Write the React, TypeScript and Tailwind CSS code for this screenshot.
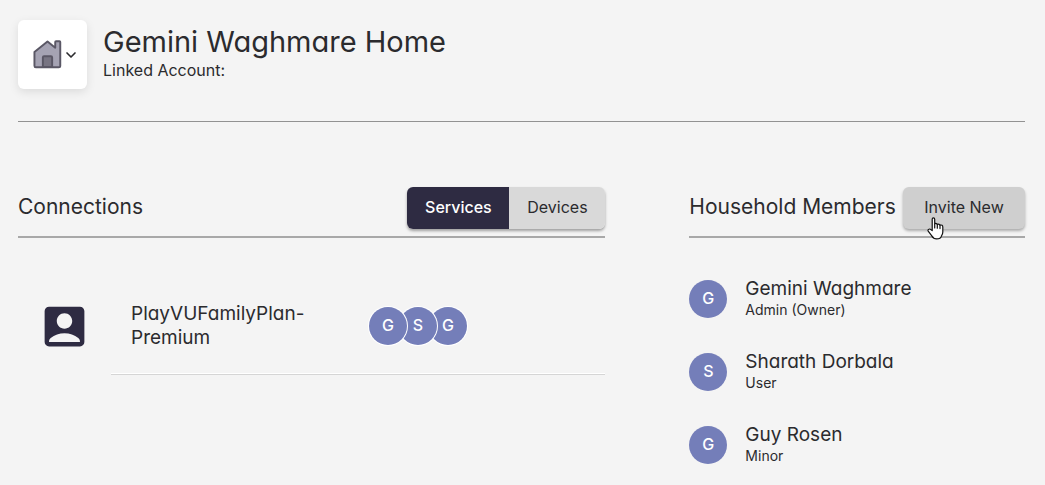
import { MdAccountBox } from "react-icons/md";
import { ChevronDown } from "lucide-react";
import { clsx } from "clsx";
import { useState } from "react";

const members = [
  { name: "Gemini Waghmare", role: "Admin (Owner)" },
  { name: "Sharath Dorbala", role: "User" },
  { name: "Guy Rosen", role: "Minor" },
];

const tabs = ["Services", "Devices"];

function HouseIcon() {
  return (
    <svg width="29" height="29" viewBox="0 0 30 30" fill="#a5a3b3" stroke="#5a5765" strokeWidth="2" strokeLinejoin="round" aria-hidden="true">
      <path d="M1.5 12.5 L15 1.5 L23 8 V2 Q23 1.2 23.8 1.2 H27.4 Q28.2 1.2 28.2 2 V26.6 Q28.2 28.2 26.6 28.2 H3 Q1.5 28.2 1.5 26.6 Z" />
      <path d="M10.2 28 V18 Q10.2 16.8 11.4 16.8 H18.6 Q19.8 16.8 19.8 18 V28 Z" fill="#777482" />
    </svg>
  );
}

function HandPointer() {
  return (
    <svg className="absolute top-[30px] left-6 z-10" width="17" height="23" viewBox="0 0 17 23" fill="#fff" stroke="#111" strokeWidth="1.2" strokeLinejoin="round" strokeLinecap="round" aria-hidden="true">
      <path d="M5.2 13.6 V2.3 Q5.2 0.9 6.4 0.9 Q7.7 0.9 7.7 2.3 V6.9 Q8.8 5.8 10.3 7.3 Q11.7 6.5 13 8.1 Q15.8 7.5 15.8 10.2 V15 Q15.8 17.2 14.5 18.8 Q13.8 21.9 9.6 21.9 Q6.4 21.9 4.8 18.9 L1.2 14.1 Q0.6 12.8 1.8 12.2 Q2.9 11.6 4 12.7 Z" />
      <path d="M7.7 7 V11 M10.3 7.4 V11.2 M13 8.2 V11.6" fill="none" />
    </svg>
  );
}

function Avatar({ name, className }: { name: string; className?: string }) {
  return (
    <div className={clsx("flex size-[38px] shrink-0 items-center justify-center rounded-full bg-[#747eb9] pb-0.5 text-base font-medium text-white", className)}>
      {name[0]}
    </div>
  );
}

export default function App() {
  const [tab, setTab] = useState("Services");

  return (
    <div className="min-h-screen bg-[#f4f4f4] px-5 pt-5 pl-[18px] font-['Inter','Liberation_Sans',sans-serif] text-[#2b2b2e] [font-feature-settings:'cv11']">
      {/* Household header */}
      <header className="flex gap-4 border-b border-[#929292] pb-8">
        <button aria-label="Change household icon" className="flex size-[69px] shrink-0 items-center justify-center gap-px rounded-md bg-white pl-1.5 shadow-[0_3px_10px_rgba(0,0,0,0.1)]">
          <HouseIcon />
          <ChevronDown size={16} strokeWidth={2.5} />
        </button>
        <div className="pt-1">
          <h1 className="text-[29px] leading-9">Gemini Waghmare Home</h1>
          <p className="text-base leading-5">Linked Account:</p>
        </div>
      </header>

      <main className="flex items-start justify-between pt-[65px]">
        {/* Connections */}
        <section className="w-7/12">
          <div className="flex items-center justify-between border-b-2 border-[#a8a8a8] pb-[7px]">
            <h2 className="pb-0.5 text-[21px] leading-7">Connections</h2>
            <div className="flex overflow-hidden rounded-md shadow-[0_2px_3px_rgba(0,0,0,0.35)]">
              {tabs.map((item) => (
                <button
                  key={item}
                  onClick={() => setTab(item)}
                  className={clsx("h-[42px] pb-0.5 text-base", tab === item ? "w-[102px] bg-[#2e2b42] font-medium text-white" : "w-24 bg-[#d9d9d9]")}
                >
                  {item}
                </button>
              ))}
            </div>
          </div>

          <div className="flex pt-[62px] pl-5">
            <MdAccountBox size={53} className="shrink-0 text-[#2e2b42]" />
            <div className="ml-5 flex flex-1 items-center border-b border-[#d5d5d5] pt-0.5 pb-6 pl-5 shadow-[inset_0_-1px_0_#fff]">
              <p className="w-[238px] text-[19px] leading-6">PlayVUFamilyPlan-<br />Premium</p>
              <div className="flex">
                {members.map((member, i) => (
                  <Avatar
                    key={member.name}
                    name={member.name}
                    className={clsx("relative ring-1 ring-white", i === 0 && "z-20", i === 1 && "z-10", i > 0 && "-ml-2")}
                  />
                ))}
              </div>
            </div>
          </div>
        </section>

        {/* Household members */}
        <section className="w-4/12">
          <div className="flex items-center justify-between border-b-2 border-[#a8a8a8] pb-[7px]">
            <h2 className="pb-0.5 text-[21px] leading-7 whitespace-nowrap">Household Members</h2>
            <div className="relative">
              <button className="h-[42px] w-[122px] rounded-md bg-[#cfcfcf] pb-0.5 text-base shadow-[0_2px_3px_rgba(0,0,0,0.3)]">Invite New</button>
              <HandPointer />
            </div>
          </div>
          <ul className="flex flex-col gap-[29px] pt-[39px]">
            {members.map((member) => (
              <li key={member.name} className="flex items-center gap-[18px]">
                <Avatar name={member.name} />
                <div>
                  <p className="text-[19px] leading-6">{member.name}</p>
                  <p className="pb-0.5 text-sm leading-[18px]">{member.role}</p>
                </div>
              </li>
            ))}
          </ul>
        </section>
      </main>
    </div>
  );
}
